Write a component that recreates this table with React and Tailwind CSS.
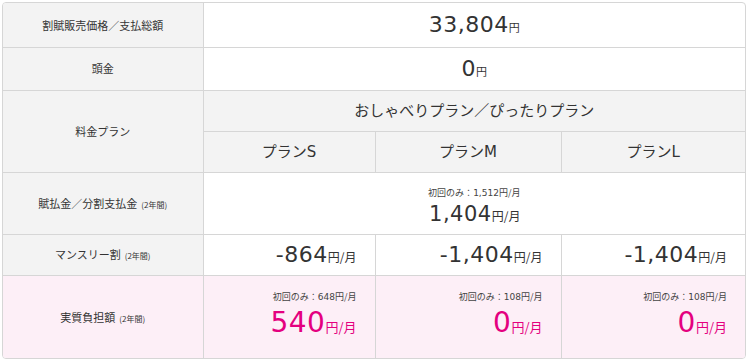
import React from "react";

const jp = "font-['Noto_Sans_CJK_JP',sans-serif]";
const num = "font-['DejaVu_Sans','Noto_Sans_CJK_JP',sans-serif]";

function Label({ children, sub, pink }) {
  return (
    <td
      className={`${pink ? "bg-[#fdeff7]" : "bg-[#f3f3f3]"} border border-[#d6d6d6] text-center text-[11px] text-[#333] ${jp}`}
      rowSpan={undefined}
    >
      {children}
      {sub && <span className="ml-1 text-[8px]">(2年間)</span>}
    </td>
  );
}

function Yen({ value, size = "text-[22px]", unit = "text-[12px]", month = true, color = "text-[#333]" }) {
  return (
    <span className={`${color} whitespace-nowrap`}>
      <span className={`${num} ${size} tracking-[0.5px]`}>{value}</span>
      <span className={`${jp} ${unit}`}>円{month ? "/月" : ""}</span>
    </span>
  );
}

export default function App() {
  return (
    <div className="w-[750px] h-[360px] bg-white pt-[2px] pl-[2px]">
      <div className="w-[744px] border border-[#d6d6d6] rounded-[4px] overflow-hidden">
        <table className="w-[742px] table-fixed border-collapse border-hidden">
          <colgroup>
            <col className="w-[200px]" />
            <col className="w-[172px]" />
            <col className="w-[186px]" />
            <col className="w-[184px]" />
          </colgroup>
          <tbody>
            <tr className="h-[44px]">
              <Label>割賦販売価格／支払総額</Label>
              <td colSpan={3} className="border border-[#d6d6d6] text-center">
                <Yen value="33,804" unit="text-[11px]" month={false} />
              </td>
            </tr>
            <tr className="h-[43px]">
              <Label>頭金</Label>
              <td colSpan={3} className="border border-[#d6d6d6] text-center">
                <Yen value="0" unit="text-[11px]" month={false} />
              </td>
            </tr>
            <tr className="h-[41px]">
              <td rowSpan={2} className={`bg-[#f3f3f3] border border-[#d6d6d6] text-center text-[11px] text-[#333] ${jp}`}>
                料金プラン
              </td>
              <td colSpan={3} className={`bg-[#f3f3f3] border border-[#d6d6d6] text-center text-[15px] text-[#333] ${jp}`}>
                おしゃべりプラン／ぴったりプラン
              </td>
            </tr>
            <tr className="h-[41px]">
              {["S", "M", "L"].map((p) => (
                <td key={p} className={`bg-[#f3f3f3] border border-[#d6d6d6] text-center text-[15px] text-[#333] ${jp}`}>
                  プラン<span className={num}>{p}</span>
                </td>
              ))}
            </tr>
            <tr className="h-[62px]">
              <Label sub>賦払金／分割支払金</Label>
              <td colSpan={3} className="border border-[#d6d6d6] text-center">
                <div className="inline-flex flex-col items-end">
                  <span className={`text-[9px] text-[#444] leading-[12px] ${jp}`}>
                    初回のみ：<span className={num}>1,512</span>円/月
                  </span>
                  <span className="leading-[26px] mt-[2px]">
                    <Yen value="1,404" size="text-[21px]" />
                  </span>
                </div>
              </td>
            </tr>
            <tr className="h-[41px]">
              <Label sub>マンスリー割</Label>
              {["-864", "-1,404", "-1,404"].map((v, i) => (
                <td key={i} className="border border-[#d6d6d6] text-right pr-[18px]">
                  <Yen value={v} />
                </td>
              ))}
            </tr>
            <tr className="h-[83px]">
              <Label sub pink>実質負担額</Label>
              {[
                ["648", "540"],
                ["108", "0"],
                ["108", "0"],
              ].map(([f, v], i) => (
                <td key={i} className="bg-[#fdeff7] border border-[#d6d6d6] text-right pr-[18px]">
                  <div className={`text-[9px] text-[#444] leading-[12px] ${jp}`}>
                    初回のみ：<span className={num}>{f}</span>円/月
                  </div>
                  <div className="leading-[32px] mt-[4px]">
                    <Yen value={v} size="text-[28px]" unit="text-[13px]" color="text-[#e4007f]" />
                  </div>
                </td>
              ))}
            </tr>
          </tbody>
        </table>
      </div>
    </div>
  );
}
